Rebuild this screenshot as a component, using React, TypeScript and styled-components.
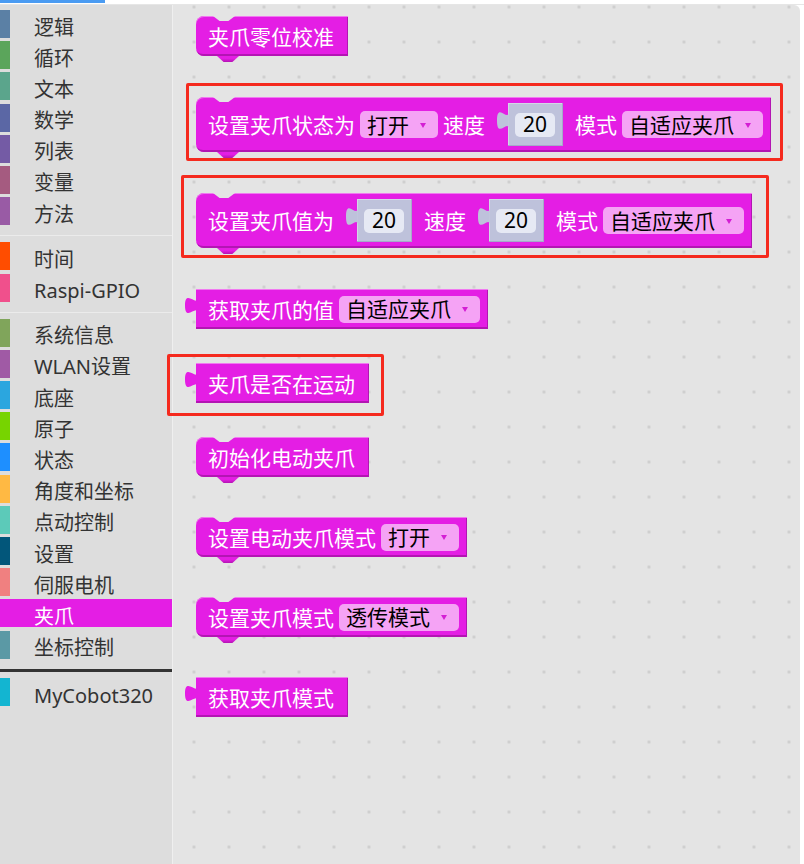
import React from 'react';
import styled, { createGlobalStyle } from 'styled-components';

const BLOCK = '#e41ee4';
const BLOCK_DARK = '#b315b3';
const BLOCK_LIGHT = '#f07af0';
const WS_BG = '#e4e4e4';

const GlobalStyle = createGlobalStyle`
  html, body { margin: 0; padding: 0; background: #ffffff; }
  body {
    width: 804px; height: 864px; overflow: hidden;
    font-family: "Noto Sans", "Noto Sans CJK SC", sans-serif;
  }
  #root { height: 100%; }
`;

const Page = styled.div`
  display: flex;
  flex-direction: column;
  height: 864px;
`;

const TopStrip = styled.div`
  height: 4px;
  background: #ffffff;
  border-bottom: 1px solid #e6e6e6;
  display: flex;
  align-items: flex-start;
`;

const Progress = styled.div`
  width: 105px;
  height: 3px;
  background: #4a9bf2;
`;

const Main = styled.div`
  flex: 1;
  display: flex;
  min-height: 0;
  padding-right: 4px;
`;

const Sidebar = styled.nav`
  width: 172px;
  flex-shrink: 0;
  background: #dddddd;
  border-right: 1px solid #efefef;
  padding-top: 5px;
  display: flex;
  flex-direction: column;
`;

const Item = styled.div<{ $color: string; $selected?: boolean }>`
  box-sizing: border-box;
  height: 28px;
  margin-bottom: 3.2px;
  display: flex;
  align-items: center;
  border-left: 10px solid ${(p) => p.$color};
  padding: 7px 0 0 24px;
  font-size: 20px;
  line-height: 20px;
  color: ${(p) => (p.$selected ? '#ffffff' : '#333333')};
  background: ${(p) => (p.$selected ? p.$color : 'transparent')};
  white-space: nowrap;
`;

const Divider = styled.div<{ $dark?: boolean }>`
  height: ${(p) => (p.$dark ? 3 : 1)}px;
  margin: 7px 0 ${(p) => (p.$dark ? 6.3 : 6)}px;
  background: ${(p) => (p.$dark ? '#333333' : '#ebebeb')};
`;

const Workspace = styled.main`
  flex: 1;
  background-color: ${WS_BG};
  border-top-right-radius: 6px;
  background-image: radial-gradient(circle, #cdcdcd 1.2px, transparent 1.8px);
  background-size: 35px 35px;
  background-position: 3.5px -15.5px;
  padding: 11px 0 0 23px;
  display: flex;
  flex-direction: column;
  align-items: flex-start;
`;

const Row = styled.div<{ $gap: number }>`
  margin-top: ${(p) => p.$gap}px;
  display: flex;
`;

const Highlight = styled.div<{ $t: number; $r: number; $b: number; $l: number }>`
  display: flex;
  border: 3px solid #f52a1e;
  border-radius: 2px;
  padding: ${(p) => `${p.$t}px ${p.$r}px ${p.$b}px ${p.$l}px`};
  margin: ${(p) => `${-p.$t - 3}px ${-p.$r - 3}px ${-p.$b - 3}px ${-p.$l - 3}px`};
`;

const Block = styled.div<{ $kind: 'statement' | 'output'; $tall?: boolean }>`
  box-sizing: border-box;
  position: relative;
  display: flex;
  align-items: center;
  gap: 5px;
  height: ${(p) => (p.$tall ? 55 : 40)}px;
  padding: 2px 14px 0 12px;
  background: ${BLOCK};
  color: #ffffff;
  font-size: 21px;
  line-height: 1;
  white-space: nowrap;
  border-radius: ${(p) => (p.$kind === 'statement' ? '8px 0 0 8px' : '0')};
  box-shadow: inset 0 1px 0 ${BLOCK_LIGHT}, inset -1px -2px 0 ${BLOCK_DARK};
`;

const Notch = styled.span`
  position: absolute;
  top: 0;
  left: 17px;
  width: 22px;
  height: 5px;
  background: ${WS_BG};
  clip-path: polygon(0 0, 100% 0, 70% 100%, 30% 100%);
`;

const NextTab = styled.span`
  position: absolute;
  top: 100%;
  left: 21px;
  width: 22px;
  height: 6px;
  background: linear-gradient(${BLOCK} 40%, ${BLOCK_DARK});
  clip-path: polygon(0 0, 100% 0, 70% 100%, 30% 100%);
`;

const OutTab = styled.svg`
  position: absolute;
  left: -11.5px;
  top: 8px;
  overflow: visible;
`;

const Label = styled.span`
  display: inline-block;
`;

const Dropdown = styled.span`
  display: inline-flex;
  align-items: center;
  height: 27px;
  margin-top: -2px;
  padding: 1px 12px 0 7px;
  box-sizing: border-box;
  gap: 11px;
  background: #f5a3f5;
  border-radius: 5px;
  color: #000000;
  font-size: 21px;
  &:last-child {
    margin-right: -6px;
  }
`;

const Caret = styled.span`
  width: 0;
  height: 0;
  border-left: 3.5px solid transparent;
  border-right: 3.5px solid transparent;
  border-top: 5px solid #d41ed4;
`;

const Slot = styled.span`
  position: relative;
  display: inline-flex;
  align-items: center;
  height: 43px;
  margin: -2px 7px 0 18px;
  padding: 0 8px 0 7px;
  background: #bec2db;
  box-shadow: inset -1px -1px 0 #a5aac9, inset 1px 1px 0 #d3d6e7;
`;

const SlotTab = styled.svg`
  position: absolute;
  left: -11px;
  top: 8px;
  overflow: visible;
`;

const NumField = styled.span`
  display: inline-flex;
  align-items: center;
  justify-content: center;
  width: 40px;
  height: 24px;
  border-radius: 5px;
  background: #e6e9f4;
  color: #000000;
  font-size: 21px;
`;

const TAB_PATH = 'M0.6,0 C0.6,10 -8,-8 -8,7.5 S0.6,5 0.6,15 Z';

function Tab({ color, as }: { color: string; as: 'out' | 'slot' }) {
  const C = as === 'out' ? OutTab : SlotTab;
  return (
    <C width={as === 'out' ? 12 : 11} height={as === 'out' ? 17 : 19} viewBox="-8 0 8 15" preserveAspectRatio="none">
      <path d={TAB_PATH} fill={color} />
    </C>
  );
}

function Drop({ text }: { text: string }) {
  return (
    <Dropdown>
      <span>{text}</span>
      <Caret />
    </Dropdown>
  );
}

function Num({ value }: { value: string }) {
  return (
    <Slot>
      <Tab color="#bec2db" as="slot" />
      <NumField>{value}</NumField>
    </Slot>
  );
}

function Statement({ tall, children }: { tall?: boolean; children: React.ReactNode }) {
  return (
    <Block $kind="statement" $tall={tall}>
      <Notch />
      <NextTab />
      {children}
    </Block>
  );
}

function Output({ children }: { children: React.ReactNode }) {
  return (
    <Block $kind="output">
      <Tab color={BLOCK} as="out" />
      {children}
    </Block>
  );
}

type Entry = { name: string; color: string; selected?: boolean } | 'sep' | 'dark';

const entries: Entry[] = [
  { name: '逻辑', color: '#5b80a5' },
  { name: '循环', color: '#5ba55b' },
  { name: '文本', color: '#5ba58c' },
  { name: '数学', color: '#5b67a5' },
  { name: '列表', color: '#745ba5' },
  { name: '变量', color: '#a55b80' },
  { name: '方法', color: '#995ba5' },
  'sep',
  { name: '时间', color: '#ff4d00' },
  { name: 'Raspi-GPIO', color: '#f0508c' },
  'sep',
  { name: '系统信息', color: '#80a55b' },
  { name: 'WLAN设置', color: '#a05aa5' },
  { name: '底座', color: '#2ba6df' },
  { name: '原子', color: '#77d400' },
  { name: '状态', color: '#1e8fff' },
  { name: '角度和坐标', color: '#ffb943' },
  { name: '点动控制', color: '#5ccab9' },
  { name: '设置', color: '#02567a' },
  { name: '伺服电机', color: '#f08080' },
  { name: '夹爪', color: BLOCK, selected: true },
  { name: '坐标控制', color: '#5b99a5' },
  'dark',
  { name: 'MyCobot320', color: '#13b5d1' },
];

export default function App() {
  return (
    <Page>
      <GlobalStyle />
      <TopStrip>
        <Progress />
      </TopStrip>
      <Main>
        <Sidebar>
          {entries.map((e, i) =>
            e === 'sep' ? (
              <Divider key={i} />
            ) : e === 'dark' ? (
              <Divider key={i} $dark />
            ) : (
              <Item key={i} $color={e.color} $selected={e.selected}>
                {e.name}
              </Item>
            )
          )}
        </Sidebar>
        <Workspace>
          <Row $gap={0}>
            <Statement>
              <Label>夹爪零位校准</Label>
            </Statement>
          </Row>
          <Row $gap={41}>
            <Highlight $t={11} $r={9} $b={6} $l={7}>
              <Statement tall>
                <Label>设置夹爪状态为</Label>
                <Drop text="打开" />
                <Label>速度</Label>
                <Num value="20" />
                <Label>模式</Label>
                <Drop text="自适应夹爪" />
              </Statement>
            </Highlight>
          </Row>
          <Row $gap={41}>
            <Highlight $t={15} $r={14} $b={7} $l={12}>
              <Statement tall>
                <Label>设置夹爪值为</Label>
                <Num value="20" />
                <Label>速度</Label>
                <Num value="20" />
                <Label>模式</Label>
                <Drop text="自适应夹爪" />
              </Statement>
            </Highlight>
          </Row>
          <Row $gap={41}>
            <Output>
              <Label>获取夹爪的值</Label>
              <Drop text="自适应夹爪" />
            </Output>
          </Row>
          <Row $gap={34}>
            <Highlight $t={6} $r={12} $b={10} $l={26}>
              <Output>
                <Label>夹爪是否在运动</Label>
              </Output>
            </Highlight>
          </Row>
          <Row $gap={34}>
            <Statement>
              <Label>初始化电动夹爪</Label>
            </Statement>
          </Row>
          <Row $gap={40}>
            <Statement>
              <Label>设置电动夹爪模式</Label>
              <Drop text="打开" />
            </Statement>
          </Row>
          <Row $gap={40}>
            <Statement>
              <Label>设置夹爪模式</Label>
              <Drop text="透传模式" />
            </Statement>
          </Row>
          <Row $gap={40}>
            <Output>
              <Label>获取夹爪模式</Label>
            </Output>
          </Row>
        </Workspace>
      </Main>
    </Page>
  );
}
